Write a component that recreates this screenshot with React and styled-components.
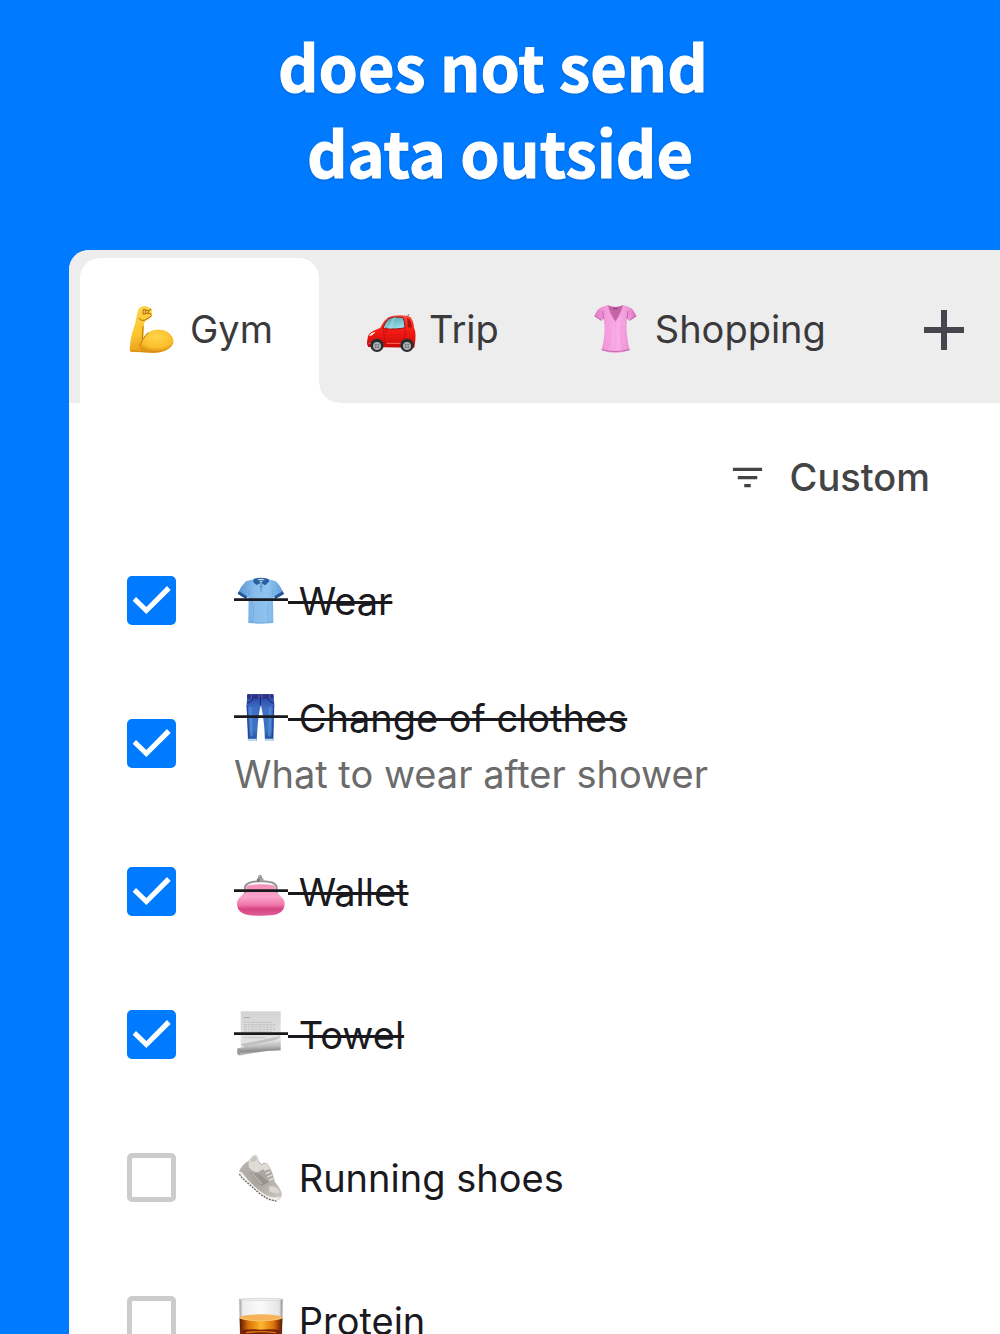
import React, { useState } from "react";
import styled, { createGlobalStyle, css } from "styled-components";

const GlobalStyle = createGlobalStyle`
  *, *::before, *::after { box-sizing: border-box; }
  html, body, #root { height: 100%; }
  body { margin: 0; background: #007aff; }
  body, button, input { font-family: Inter, "Liberation Sans", sans-serif; }
`;

const Page = styled.main`
  height: 100vh;
  overflow: hidden;
  display: flex;
  flex-direction: column;
  background: #007aff;
`;

const Headline = styled.h1`
  flex: none;
  margin: 0;
  padding: 22px 0 56px;
  color: #fff;
  font-family: "Noto Sans CJK JP", "Noto Sans", sans-serif;
  font-weight: 700;
  font-size: 63px;
  line-height: 86px;
  text-align: center;
  white-space: pre;
  -webkit-text-stroke: 1px #fff;
  text-shadow: 0 1px 3px rgba(0, 0, 0, 0.25);
`;

const Panel = styled.section`
  flex: 1;
  min-height: 0;
  margin-left: 69px;
  overflow: hidden;
  background: #fff;
  border-top-left-radius: 20px;
`;

const TabBar = styled.nav`
  display: flex;
  height: 153px;
  padding: 8px 0 0 11px;
  background: #ededed;
`;

const Tab = styled.button`
  position: relative;
  flex: none;
  display: flex;
  align-items: center;
  gap: 10px;
  padding: 0 46px 2px;
  border: 0;
  border-radius: 20px 20px 0 0;
  background: transparent;
  color: #3a3a3c;
  font-size: 38px;
  line-height: 57px;
  cursor: pointer;

  ${(p) =>
    p.$active &&
    css`
      background: #fff;
      &::after {
        content: "";
        position: absolute;
        left: 100%;
        bottom: 0;
        width: 20px;
        height: 20px;
        background: radial-gradient(circle at 100% 0, transparent 19px, #fff 20px);
      }
    `}
`;

const AddButton = styled.button`
  flex: none;
  display: flex;
  align-items: center;
  padding: 0 36px 2px 52px;
  border: 0;
  background: transparent;
  cursor: pointer;
`;

const Toolbar = styled.div`
  display: flex;
  justify-content: flex-end;
  height: 126px;
  padding: 46px 70px 0 0;
`;

const SortButton = styled.button`
  display: flex;
  align-items: center;
  gap: 23px;
  height: 57px;
  padding: 0;
  border: 0;
  background: transparent;
  color: #444;
  font-size: 38px;
  font-weight: 500;
  line-height: 57px;
  cursor: pointer;
`;

const List = styled.ul`
  margin: 0;
  padding: 0 58px;
  list-style: none;
`;

const Row = styled.li`
  display: flex;
  gap: 58px;
  min-height: 143px;
`;

const Tick = styled.span`
  flex: none;
  display: grid;
  height: 49px;
  margin-top: 47px;

  & > * {
    grid-area: 1 / 1;
  }
`;

const Box = styled.input`
  appearance: none;
  width: 49px;
  height: 49px;
  margin: 0;
  border: 5px solid #ccc;
  border-radius: 5px;
  background: #fff;
  cursor: pointer;

  &:checked {
    border-color: #007aff;
    background: #007aff;
  }
`;

const TickMark = styled.svg`
  width: 49px;
  height: 49px;
  pointer-events: none;
`;

const Label = styled.label`
  flex: 1;
  display: flex;
  flex-direction: column;
  justify-content: center;
  padding: 17px 0;
  font-size: 38px;
  line-height: 57px;
`;

const Title = styled.span`
  display: flex;
  align-items: center;
  color: #1a1a1e;
`;

const Name = styled.span`
  padding-top: 2px;
  line-height: 55px;
  white-space: pre;
  text-decoration: ${(p) => (p.$done ? "line-through 3px" : "none")};
`;

const Note = styled.span`
  color: #6b6b6b;
`;

const Glyph = styled.svg`
  flex: none;
  display: block;
  width: 54px;
  height: 54px;
`;

const art = {
  gym: (
    <>
      <defs>
        <linearGradient id="gymSkin" x1="0" y1="0" x2="0.3" y2="1">
          <stop offset="0" stopColor="#ffd54a" />
          <stop offset="0.6" stopColor="#fdc52f" />
          <stop offset="1" stopColor="#e59a16" />
        </linearGradient>
        <radialGradient id="gymMuscle" cx="0.5" cy="0.3" r="0.7">
          <stop offset="0" stopColor="#ffd548" />
          <stop offset="0.7" stopColor="#fbbf2c" />
          <stop offset="1" stopColor="#dd9014" />
        </radialGradient>
      </defs>
      <path d="M36 22Q40 12 52 10Q58 7 64 11L76 17Q80 20 77 27L79 35Q78 42 69 47L58 55Q52 60 54 76L52 107Q60 88 85 81Q112 77 129 91Q143 104 142 118Q139 134 118 143Q92 153 62 148L16 147Q10 146 11 138Q14 100 22 79Q29 61 30 47Z" fill="url(#gymSkin)" />
      <path d="M52 111Q62 85 88 81Q116 78 132 94Q144 108 141 120Q132 141 96 147Q64 150 42 137Q43 120 52 111Z" fill="url(#gymMuscle)" />
      <path d="M51 70L49 113L41 127M53 106Q57 97 66 89" fill="none" stroke="#bd7810" strokeWidth="3" strokeLinecap="round" />
      <path d="M14 143Q63 151 108 144" fill="none" stroke="#d68b15" strokeWidth="3" />
      <path d="M39 46Q48 57 61 49L76 39M52 20Q49 27 52 34L66 30L75 34M54 20L67 23L74 19M60 22L58 29M69 24L66 30" fill="none" stroke="#a86813" strokeWidth="3" strokeLinecap="round" />
    </>
  ),
  car: (
    <>
      <defs>
        <linearGradient id="carBody" x1="0" y1="0" x2="0" y2="1">
          <stop offset="0" stopColor="#ff4a3c" />
          <stop offset="0.4" stopColor="#fb1f16" />
          <stop offset="1" stopColor="#c90808" />
        </linearGradient>
        <linearGradient id="carGlass" x1="0" y1="0" x2="0.5" y2="1">
          <stop offset="0" stopColor="#4f9dac" />
          <stop offset="1" stopColor="#97dbe6" />
        </linearGradient>
      </defs>
      <path d="M125 43L132 34" stroke="#555" strokeWidth="3" />
      <path d="M7 111Q8 92 24 84L46 74Q56 53 70 43Q82 37 106 37Q129 37 137 43Q146 55 147 75Q153 85 151 112L148 134L10 132Q4 124 7 111Z" fill="url(#carBody)" />
      <path d="M54 77Q60 54 75 45Q89 40 113 43Q119 50 120 74Q100 80 54 77Z" fill="url(#carGlass)" stroke="#8b1712" strokeWidth="3" />
      <path d="M127 45Q137 49 141 73L128 74Q128 56 127 45Z" fill="#a51612" />
      <path d="M84 43L70 77L79 77L93 43Z" fill="#b7e6ec" opacity="0.4" />
      <path d="M56 81Q58 109 61 128M119 79Q125 95 112 119" fill="none" stroke="#af0d0a" strokeWidth="2" />
      <path d="M13 98Q17 87 32 86Q24 97 14 100Z" fill="#ffe3d4" />
      <path d="M54 78Q65 69 69 78L68 88L57 87Z" fill="#d91713" />
      <path d="M11 121L56 123M65 121L110 121" stroke="#ff6958" strokeWidth="3" />
      <circle cx="36" cy="127" r="20" fill="#292d30" />
      <circle cx="36" cy="129" r="12" fill="#a5a9aa" />
      <circle cx="36" cy="129" r="7" fill="#62676b" />
      <circle cx="126" cy="127" r="20" fill="#292d30" />
      <circle cx="126" cy="129" r="12" fill="#a5a9aa" />
      <circle cx="126" cy="129" r="7" fill="#62676b" />
      <path d="M36 118v22M25 129h22M126 118v22M115 129h22" stroke="#d0d2d2" strokeWidth="2" />
    </>
  ),
  blouse: (
    <>
      <defs>
        <linearGradient id="blouse" x1="0" y1="0" x2="1" y2="0">
          <stop offset="0" stopColor="#dc79c4" />
          <stop offset="0.25" stopColor="#f499dc" />
          <stop offset="0.55" stopColor="#faafe7" />
          <stop offset="0.85" stopColor="#eb91d3" />
          <stop offset="1" stopColor="#d76bb9" />
        </linearGradient>
      </defs>
      <path d="M48 7L73 13L98 7Q119 12 128 23L136 38L115 53L108 48Q103 88 116 141Q94 151 73 151Q52 151 32 141Q46 88 38 48L31 53L10 38L18 23Q28 12 48 7Z" fill="url(#blouse)" />
      <path d="M50 7Q73 17 96 7Q92 27 73 59Q54 27 50 7Z" fill="#c465a7" />
      <path d="M66 14h14v5H66Z" fill="#9b4584" />
      <path d="M49 8Q52 29 73 59Q94 29 98 8" fill="none" stroke="#f59fdd" strokeWidth="4" />
      <path d="M32 140Q71 151 116 140M35 24L38 48M111 24L108 48M11 39L31 52M136 39L116 52" fill="none" stroke="#c265a8" strokeWidth="3" />
      <path d="M57 74Q60 111 48 139M91 72Q86 113 99 140M74 64Q77 105 74 142" fill="none" stroke="#d97ac0" strokeWidth="2" opacity="0.4" />
    </>
  ),
  shirt: (
    <>
      <defs>
        <linearGradient id="shirt" x1="0" y1="0" x2="1" y2="0">
          <stop offset="0" stopColor="#5796d1" />
          <stop offset="0.35" stopColor="#87bcec" />
          <stop offset="0.65" stopColor="#8fc3f0" />
          <stop offset="1" stopColor="#5f9fd9" />
        </linearGradient>
      </defs>
      <path d="M60 15L103 15L125 22Q139 34 150 60L123 75L117 66L118 147Q80 151 43 147L44 66L37 75L11 59Q20 37 36 22Z" fill="url(#shirt)" />
      <path d="M11 59L15 52L39 67L37 76ZM150 60L146 52L121 67L123 76Z" fill="#24569b" />
      <path d="M60 14Q80 8 102 14L106 22L94 34L81 27L67 33L57 23Z" fill="#28619f" />
      <path d="M70 16Q81 12 92 16L81 27Z" fill="#c4dcf0" />
      <path d="M71 19Q82 22 91 19" fill="none" stroke="#396ca4" strokeWidth="3" />
      <path d="M77 29L79 53H84L86 31" fill="#6babe3" />
      <circle cx="81" cy="38" r="2" fill="#316094" />
      <path d="M45 50L44 77M116 49L117 77M55 86Q64 114 54 145M104 88Q97 119 103 145M44 144Q81 149 117 144" fill="none" stroke="#5a98d0" strokeWidth="2" opacity="0.6" />
    </>
  ),
  jeans: (
    <>
      <defs>
        <linearGradient id="jeans" x1="0" y1="0" x2="0" y2="1">
          <stop offset="0" stopColor="#263e9e" />
          <stop offset="0.3" stopColor="#3f6fc6" />
          <stop offset="0.75" stopColor="#3974c3" />
          <stop offset="1" stopColor="#244c99" />
        </linearGradient>
      </defs>
      <path d="M40 10L118 10L121 40L118 150H93Q91 87 81 43Q72 68 68 150H42Q39 78 38 40Z" fill="url(#jeans)" />
      <path d="M40 10H118L119 21Q79 27 39 21Z" fill="#2a3187" />
      <path d="M52 10v13M75 10v13M84 10v13M107 10v13" stroke="#7380bd" strokeWidth="2" />
      <path d="M39 36Q51 36 56 22M102 22Q107 36 120 36M79 23V42" fill="none" stroke="#161f65" strokeWidth="3" />
      <path d="M49 48L53 136M109 47L106 136" stroke="#6b9ee0" strokeWidth="7" opacity="0.5" />
      <path d="M39 42L45 143M119 42L115 143" stroke="#233f96" strokeWidth="3" />
      <path d="M42 143H68V150H42ZM93 143H118V150H93Z" fill="#b8daef" />
    </>
  ),
  purse: (
    <>
      <defs>
        <linearGradient id="purse" x1="0" y1="0" x2="0" y2="1">
          <stop offset="0" stopColor="#f48fb9" />
          <stop offset="0.4" stopColor="#fba4cb" />
          <stop offset="0.65" stopColor="#ef78ac" />
          <stop offset="0.78" stopColor="#d54582" />
          <stop offset="1" stopColor="#e05e98" />
        </linearGradient>
      </defs>
      <path d="M36 62Q80 54 125 62L127 80Q136 90 146 100Q153 108 152 120Q149 144 119 150Q80 155 42 150Q12 144 9 120Q8 108 15 100Q25 90 33 80Z" fill="url(#purse)" />
      <path d="M33 84V66Q36 55 54 51Q80 46 107 51Q125 54 128 66V84" fill="none" stroke="#929292" strokeWidth="6" />
      <path d="M36 81V68Q39 58 55 54Q80 50 105 54Q121 57 125 68V81" fill="none" stroke="#ddd" strokeWidth="2" />
      <circle cx="78" cy="36" r="6" fill="#8d8a89" />
      <circle cx="83" cy="44" r="6" fill="#a5a4a2" />
      <circle cx="73" cy="45" r="5" fill="#777" />
      <circle cx="76" cy="34" r="2" fill="#eee" />
    </>
  ),
  scroll: (
    <>
      <defs>
        <linearGradient id="paper" x1="0" y1="0" x2="0" y2="1">
          <stop offset="0" stopColor="#d4d4d4" />
          <stop offset="1" stopColor="#e7e7e7" />
        </linearGradient>
        <linearGradient id="roll" x1="0" y1="0" x2="0.1" y2="1">
          <stop offset="0" stopColor="#f4f4f4" />
          <stop offset="0.5" stopColor="#bbb" />
          <stop offset="0.75" stopColor="#8e8e8e" />
          <stop offset="1" stopColor="#ccc" />
        </linearGradient>
      </defs>
      <path d="M20 10H140V128L20 130Z" fill="url(#paper)" />
      <path d="M29 29h19" stroke="#aaa" strokeWidth="3" />
      <path d="M29 43H116M29 50H124M29 57H118M29 64H124M29 71H112M29 89H95" stroke="#c0c0c0" strokeWidth="3" strokeDasharray="11 2 7 2" />
      <path d="M20 108L138 85Q142 90 120 97L32 119Z" fill="#c2c2c2" />
      <path d="M10 121Q59 115 140 93V127Q78 129 17 143Q9 138 10 121Z" fill="url(#roll)" />
      <ellipse cx="14" cy="132" rx="4" ry="10" fill="#9b9b9b" />
    </>
  ),
  shoe: (
    <>
      <defs>
        <linearGradient id="shoe" x1="0" y1="0" x2="1" y2="1">
          <stop offset="0" stopColor="#bcb8b2" />
          <stop offset="0.5" stopColor="#aaa59e" />
          <stop offset="1" stopColor="#cdcac5" />
        </linearGradient>
      </defs>
      <path d="M15 61Q24 40 44 29Q56 11 64 11Q74 17 73 29L82 40Q89 33 101 38L114 63L123 93Q143 116 144 132Q139 147 127 149Q100 145 81 128L22 75Z" fill="url(#shoe)" />
      <path d="M44 29Q56 11 64 11Q76 18 72 32L82 43Q91 35 101 39L108 57Q88 49 73 63Q55 64 44 48Z" fill="#dedbd6" />
      <path d="M49 31Q62 36 69 25L65 15Q55 17 49 31Z" fill="#c9c4bd" />
      <path d="M15 60L25 65Q57 109 94 131Q117 144 140 137L128 150Q103 147 79 129L20 75Z" fill="#f0efed" />
      <path d="M16 69L24 81L75 126Q104 149 127 150" fill="none" stroke="#6b6764" strokeWidth="4" strokeDasharray="6 3" />
      <path d="M45 64L83 105L105 93L76 69Z" fill="#99948d" />
      <path d="M54 67L84 99" stroke="#b9b4ad" strokeWidth="5" />
      <path d="M90 58L103 52M95 68L109 62M100 78L114 72M106 88L118 82" stroke="#e6e3df" strokeWidth="4" />
      <path d="M107 105Q128 104 138 124Q127 132 105 120Z" fill="#dad7d2" />
    </>
  ),
  glass: (
    <>
      <defs>
        <linearGradient id="glassWall" x1="0" y1="0" x2="1" y2="0">
          <stop offset="0" stopColor="#999" />
          <stop offset="0.08" stopColor="#ededed" />
          <stop offset="0.5" stopColor="#fafafa" />
          <stop offset="0.92" stopColor="#e5e5e5" />
          <stop offset="1" stopColor="#888" />
        </linearGradient>
        <linearGradient id="whisky" x1="0" y1="0" x2="1" y2="0">
          <stop offset="0" stopColor="#5c1804" />
          <stop offset="0.2" stopColor="#d9700b" />
          <stop offset="0.5" stopColor="#ffb62b" />
          <stop offset="0.8" stopColor="#dd720c" />
          <stop offset="1" stopColor="#5a1604" />
        </linearGradient>
      </defs>
      <path d="M16 15H146L144 149Q80 155 18 149Z" fill="url(#glassWall)" />
      <ellipse cx="81" cy="16" rx="64" ry="3" fill="#f5f5f5" stroke="#ccc" strokeWidth="2" />
      <path d="M17 72H145L143 131Q81 140 19 131Z" fill="url(#whisky)" />
      <ellipse cx="81" cy="71" rx="63" ry="10" fill="#f5b45a" />
      <path d="M18 73Q80 89 144 73" fill="none" stroke="#ffd27a" strokeWidth="2" />
      <path d="M19 109Q52 104 81 107Q112 104 143 109L141 130Q82 138 21 130Z" fill="#75230a" />
      <path d="M36 116Q78 110 126 116" fill="none" stroke="#e17912" strokeWidth="4" />
    </>
  ),
};

function Emoji({ name, struck }) {
  return (
    <Glyph viewBox="0 0 162 162" aria-hidden="true">
      {art[name]}
      {struck && <path d="M0 77H162" stroke="#1a1a1e" strokeWidth="8" />}
    </Glyph>
  );
}

const tabs = [
  { label: "Gym", icon: "gym" },
  { label: "Trip", icon: "car" },
  { label: "Shopping", icon: "blouse" },
];

const initialItems = [
  { id: "wear", name: "Wear", icon: "shirt", done: true },
  { id: "change", name: "Change of clothes", note: "What to wear after shower", icon: "jeans", done: true },
  { id: "wallet", name: "Wallet", icon: "purse", done: true },
  { id: "towel", name: "Towel", icon: "scroll", done: true },
  { id: "shoes", name: "Running shoes", icon: "shoe", done: false },
  { id: "protein", name: "Protein", icon: "glass", done: false },
];

export default function App() {
  const [active, setActive] = useState("Gym");
  const [items, setItems] = useState(initialItems);
  const toggle = (id) =>
    setItems((list) => list.map((it) => (it.id === id ? { ...it, done: !it.done } : it)));

  return (
    <>
      <GlobalStyle />
      <Page>
        <Headline>{"does not send \ndata outside"}</Headline>
        <Panel>
          <TabBar>
            {tabs.map((t) => (
              <Tab key={t.label} $active={t.label === active} onClick={() => setActive(t.label)}>
                <Emoji name={t.icon} />
                {t.label}
              </Tab>
            ))}
            <AddButton aria-label="Add list">
              <svg width="40" height="40" viewBox="0 0 40 40" aria-hidden="true">
                <path d="M20 0V40M0 20H40" stroke="#48454f" strokeWidth="6" />
              </svg>
            </AddButton>
          </TabBar>
          <Toolbar>
            <SortButton>
              <svg width="39" height="39" viewBox="0 0 24 24" aria-hidden="true">
                <path d="M3 6h18v2H3zM6 11h12v2H6zM10 16h4v2h-4z" fill="#444" />
              </svg>
              Custom
            </SortButton>
          </Toolbar>
          <List>
            {items.map((it) => (
              <Row key={it.id}>
                <Tick>
                  <Box type="checkbox" id={it.id} checked={it.done} onChange={() => toggle(it.id)} />
                  {it.done && (
                    <TickMark viewBox="0 0 147 147" aria-hidden="true">
                      <path d="M17 74L58 114L131 42L120 30L58 93L27 63Z" fill="#fff" />
                    </TickMark>
                  )}
                </Tick>
                <Label htmlFor={it.id}>
                  <Title>
                    <Emoji name={it.icon} struck={it.done} />
                    <Name $done={it.done}>{" " + it.name}</Name>
                  </Title>
                  {it.note && <Note>{it.note}</Note>}
                </Label>
              </Row>
            ))}
          </List>
        </Panel>
      </Page>
    </>
  );
}
